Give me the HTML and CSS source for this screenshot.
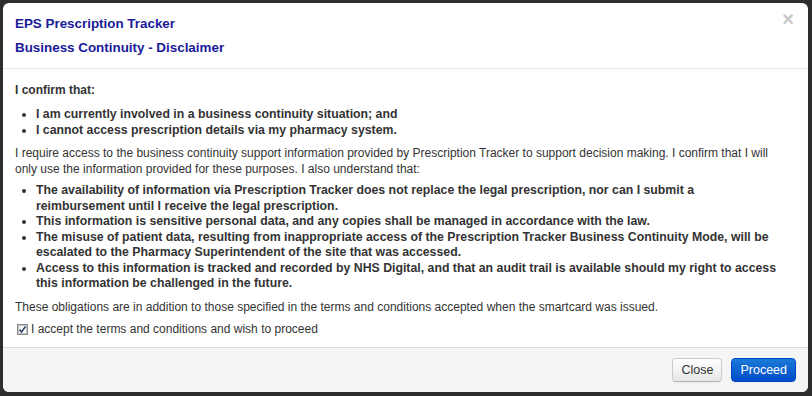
FILE: index.html
```html
<!DOCTYPE html>
<html lang="en">
<head>
    <meta charset="UTF-8">
    <meta name="viewport" content="width=device-width, initial-scale=1.0">
    <title>Business Continuity - Disclaimer</title>
    <link rel="stylesheet" href="styles.css">
</head>
<body>
    <div class="modal">
        <div class="modal-header">
            <span class="close">&times;</span>
            <h3>EPS Prescription Tracker</h3>
            <h4>Business Continuity - Disclaimer</h4>
        </div>
        <div class="modal-body">
            <p class="lead">I confirm that:</p>
            <ul>
                <li>I am currently involved in a business continuity situation; and</li>
                <li>I cannot access prescription details via my pharmacy system.</li>
            </ul>
            <p>I require access to the business continuity support information provided by Prescription Tracker to support decision making. I confirm that I will only use the information provided for these purposes. I also understand that:</p>
            <ul>
                <li>The availability of information via Prescription Tracker does not replace the legal prescription, nor can I submit a reimbursement until I receive the legal prescription.</li>
                <li>This information is sensitive personal data, and any copies shall be managed in accordance with the law.</li>
                <li>The misuse of patient data, resulting from inappropriate access of the Prescription Tracker Business Continuity Mode, will be escalated to the Pharmacy Superintendent of the site that was accessed.</li>
                <li>Access to this information is tracked and recorded by NHS Digital, and that an audit trail is available should my right to access this information be challenged in the future.</li>
            </ul>
            <p>These obligations are in addition to those specified in the terms and conditions accepted when the smartcard was issued.</p>
            <label class="checkbox">
                <span class="tick">
                    <svg width="11" height="11" viewBox="0 0 11 11">
                        <rect x="0.5" y="0.5" width="10" height="10" fill="#e9e9e9" stroke="#8a8a8a"/>
                        <rect x="1.5" y="1.5" width="8" height="8" fill="#f4f4f4" stroke="#c4c4c4"/>
                        <path d="M2.5 5.5 L4.5 8 L8.5 2.5" fill="none" stroke="#2a3a70" stroke-width="1.4"/>
                    </svg>
                </span>
                I accept the terms and conditions and wish to proceed
            </label>
        </div>
        <div class="modal-footer">
            <button class="btn">Close</button>
            <button class="btn btn-primary">Proceed</button>
        </div>
    </div>
</body>
</html>
```

FILE: styles.css
```css
body {
    margin: 0;
    background: #2e2e2e;
    font-family: 'Liberation Sans', Arial, sans-serif;
    font-size: 12px;
    line-height: 16px;
    color: #333;
    padding: 3px 4px 4px 3px;
    height: 396px;
    box-sizing: border-box;
}

.modal {
    background: #fff;
    border-radius: 6px;
    height: 389px;
    display: flex;
    flex-direction: column;
    overflow: hidden;
}

.modal-header {
    padding: 9px 15px 8px 12px;
    border-bottom: 1px solid #e8e8e8;
    position: relative;
}

.modal-header h3,
.modal-header h4 {
    margin: 0;
    font-size: 13.4px;
    line-height: 24px;
    color: #1a1a99;
    font-weight: bold;
}

.close {
    position: absolute;
    top: 6px;
    right: 14px;
    font-size: 20px;
    font-weight: bold;
    line-height: 20px;
    color: #c8c8c8;
}

.modal-body {
    flex: 1;
    padding: 13px 15px 0 12px;
}

.modal-body p {
    margin: 0 0 6px;
}

.modal-body p.lead {
    font-weight: bold;
    margin-bottom: 9px;
}

.modal-body ul {
    margin: 0 10px 7px 0;
    padding-left: 21px;
    font-weight: bold;
    font-size: 12.3px;
}

.modal-body li {
    line-height: 15.5px;
}

.checkbox {
    display: flex;
    align-items: center;
    gap: 3px;
    margin-top: 6px;
}

.tick {
    display: flex;
    margin: 2px 0 0 2px;
}

.modal-footer {
    background: #f5f5f5;
    border-top: 1px solid #ddd;
    height: 44px;
    display: flex;
    justify-content: flex-end;
    align-items: center;
    gap: 9px;
    padding: 0 12px 0 0;
}

.btn {
    font-family: inherit;
    font-size: 12.5px;
    height: 24px;
    padding: 0 8px;
    border-radius: 4px;
    border: 1px solid #ccc;
    border-bottom-color: #b3b3b3;
    background: linear-gradient(#fff, #e6e6e6);
    color: #333;
    box-shadow: 0 1px 2px rgba(0, 0, 0, 0.05);
}

.btn-primary {
    color: #fff;
    border-color: #0048c8;
    background: linear-gradient(#1a7ad8, #004cc8);
}
```
